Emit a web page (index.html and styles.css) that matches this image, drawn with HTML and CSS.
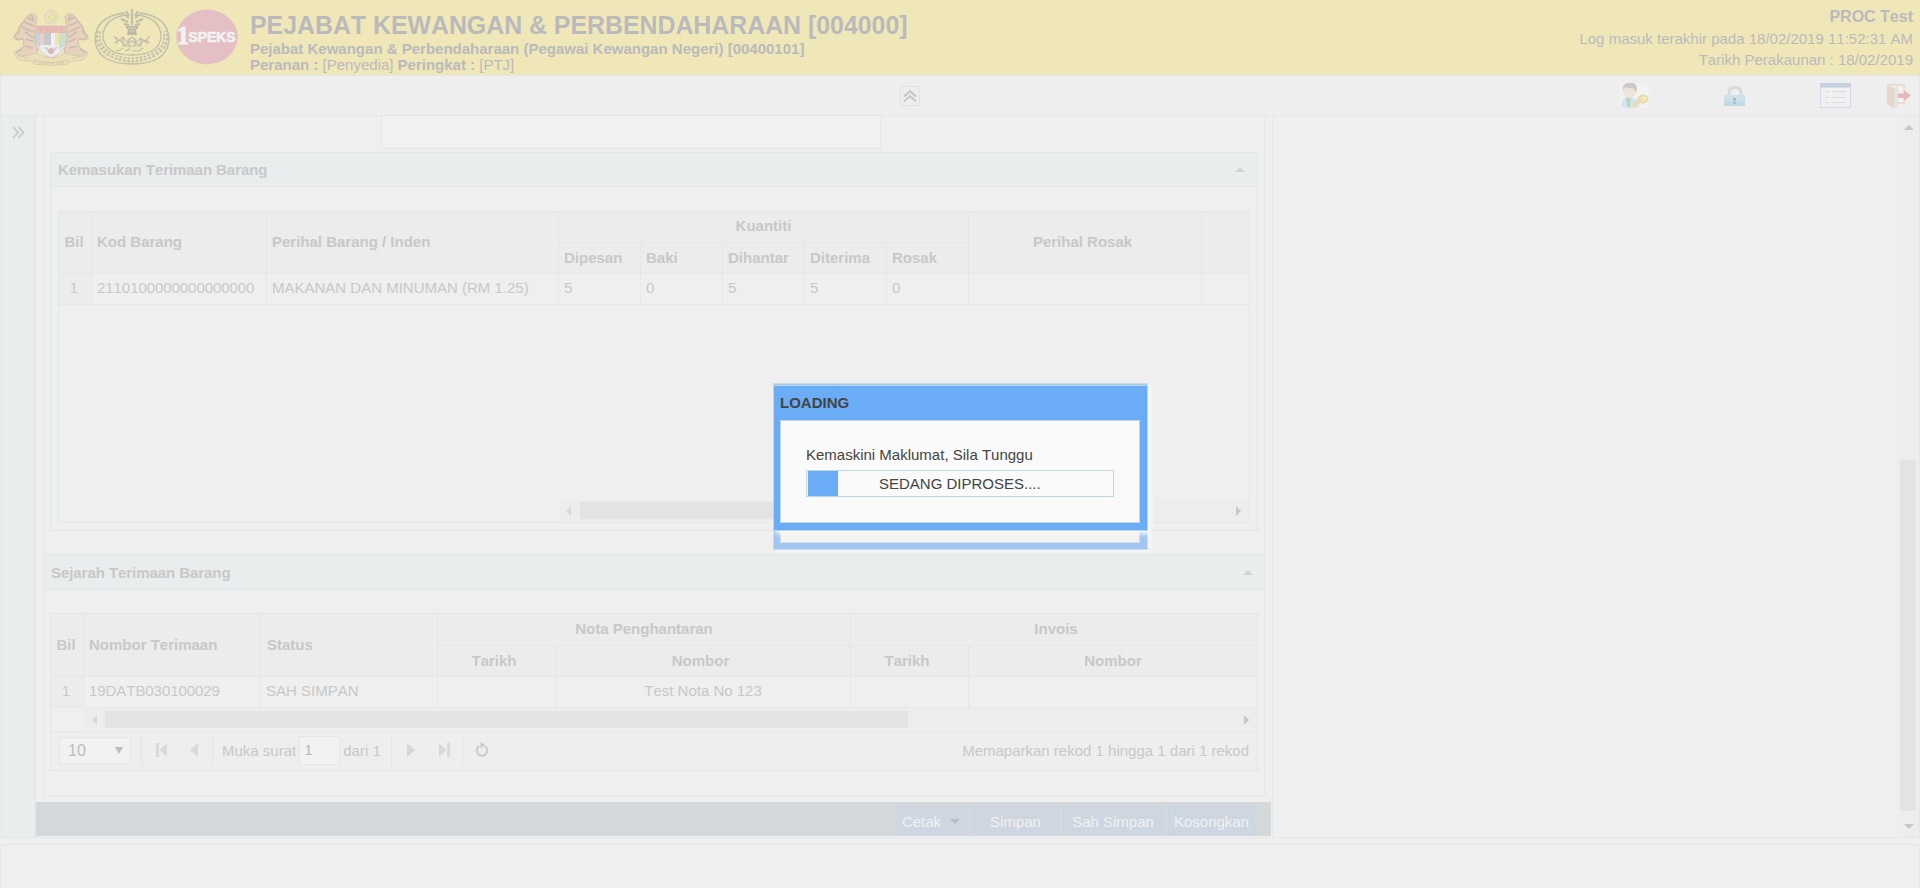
FILE: index.html
```html
<!DOCTYPE html>
<html lang="ms">
<head>
<meta charset="utf-8">
<title>1SPEKS - Terimaan Barang</title>
<link rel="stylesheet" href="styles.css">
</head>
<body>
<header class="banner">
  <div class="logos">
    <svg class="logo-crest" width="76" height="57" viewBox="0 0 76 57" fill="none">
      <circle cx="38" cy="8" r="6" stroke="#e3ddbd" stroke-width="3"/>
      <circle cx="39" cy="8" r="3" fill="#eee5b0" stroke="#dcd3a8"/>
      <g id="tiger">
        <path d="M24 8q-4-5-8-2l-4 4-5 9-5 8 3 4 6-1-1 8-6 5 2 4h10l8-3 1-9-4-9 1-8z" fill="#e8d2bb" stroke="#d2c6b4" stroke-width="1.2"/>
        <path d="M14 8l7 4M11 13l10 4M9 18l11 5M12 23l9 6M13 30l9 3M12 37l8 2M7 22l-5 4M18 6l3 5M3 43l6-3" stroke="#c8bdba" stroke-width="1.6"/>
        <path d="M12 11q-8 7-7 15M23 20q-2 12 2 21" stroke="#dbbcaf" stroke-width="1.2"/>
        <path d="M10 29q-7 3-9 0l1-3" stroke="#cfc0ad" stroke-width="1.3"/>
      </g>
      <use href="#tiger" transform="matrix(-1 0 0 1 76 0)"/>
      <path d="M23 17h30v15q0 11-15 17-15-6-15-17z" fill="#ececec" stroke="#d8ccc5"/>
      <path d="M23 17h30v7H23z" fill="#e8b8b4"/><path d="M25 19v4m6-4v4m7-4v4m7-4v4m6-4v4" stroke="#e2cfaa" stroke-width="1.2"/>
      <path d="M23 24h4v15q-4-4-4-9z" fill="#c5d2df"/><path d="M27 24h4v12h-4z" fill="#e8cfc9"/>
      <path d="M31 24h7v12h-7z" fill="#c9c9cb"/><path d="M38 24h4v12h-4z" fill="#f1f1f1"/><path d="M42 24h4v12h-4z" fill="#efe5a8"/>
      <path d="M46 24h7v7q0 6-7 10z" fill="#c9dfcd"/>
      <circle cx="38" cy="42" r="3" fill="#d9b3b5"/><path d="M32 38l3 3m9-3-3 3" stroke="#bccbd6" stroke-width="1.6"/>
      <path d="M1 42q3 6 12 5l10-3q15 10 30 0l10 3q9 1 12-5-1 11-14 10-23 8-46 0Q2 53 1 42z" fill="#eadfb9" stroke="#d8cfb2"/>
      <path d="M21 51q17 5 34 0v4q-17 3-34 0z" fill="#eadfb4" stroke="#d7cdac"/>
      <path d="M25 54h26M6 47l11 3m53-3-11 3" stroke="#cec6af" stroke-dasharray="2 1"/>
    </svg>
    <svg class="logo-seal" width="76" height="57" viewBox="0 0 76 57" fill="none" stroke="#c1beab">
      <path d="M30 4Q1 8 1 31q2 24 37 24t37-24Q75 8 46 4" stroke-width="1.4"/>
      <path d="M31 6Q9 10 9 28q2 18 29 18t29-18Q67 10 45 6" stroke-width="1.3"/>
      <path d="M5 22Q1 37 17 46q21 10 42 0 16-9 12-24" stroke-width="5" stroke-dasharray="2.600 1.600" stroke="#c4c1ad"/>
      <path d="M5 22Q1 37 17 46q21 10 42 0 16-9 12-24" stroke="#eee5b6" stroke-width="1"/>
      <path d="M38 0v16M30 5l5 4m11-4-5 4M27 10l7 3m15-3-7 3M32 2l3 5m9-5-3 5M30 15l5 1m11-1-5 1" stroke-width="2.2"/>
      <path d="M31 17h14l-3 4 1 5H33l1-5z" fill="#bbb9a7" stroke="none"/><path d="M34 19h8m-7 3h6" stroke="#dbd3b0"/>
      <path d="M20 27l4 5 5-4 4 5 5-5 4 5 5-4 4 4 5-6M20 34l6-3 5 5 7-4 7 4 5-5 6 3M23 28v7m6-7v8m6-7v8m6-8v8m6-8v8m6-8v7" stroke-width="1.100"/>
      <path d="M22 41q4 2 7-2m2 3q5-1 5-4m2 4h7l4-3M28 37h19" stroke-width="1.200"/>
    </svg>
    <svg class="logo-speks" width="62" height="56" viewBox="0 0 62 56">
      <ellipse cx="31" cy="28" rx="30.7" ry="27.4" fill="#e4bfc3"/>
      <text x="1" y="34.500" textLength="12" lengthAdjust="spacingAndGlyphs" font-family="Liberation Serif, serif" font-weight="bold" font-size="25" fill="#f2f2f2" stroke="#f2f2f2">1</text>
      <text x="12.500" y="32.500" textLength="47" lengthAdjust="spacingAndGlyphs" font-family="Liberation Sans, sans-serif" font-weight="bold" font-size="14.500" fill="#f2f2f2" stroke="#f2f2f2" stroke-width=".7">SPEKS</text>
    </svg>
  </div>
  <div class="office">
    <h1>PEJABAT KEWANGAN &amp; PERBENDAHARAAN [004000]</h1>
    <p class="office-sub">Pejabat Kewangan &amp; Perbendaharaan (Pegawai Kewangan Negeri) [00400101]</p>
    <p class="office-role"><b>Peranan :</b> [Penyedia] <b>Peringkat :</b> [PTJ]</p>
  </div>
  <div class="session">
    <strong>PROC Test</strong>
    <span>Log masuk terakhir pada 18/02/2019 11:52:31 AM</span>
    <span>Tarikh Perakaunan : 18/02/2019</span>
  </div>
</header>

<div class="toolbar">
  <div class="collapse-top"><svg width="14" height="14" viewBox="0 0 14 14" fill="none" stroke="#c6c6c6" stroke-width="2"><path d="M1 7.500l6-5.500 6 5.500M1 12.500l6-5.500 6 5.500"/></svg></div>
  <div class="tools">
    <svg class="tool-user" width="30" height="26" viewBox="0 0 30 26">
      <path d="M0 0h30v25H0z" fill="#f2f2f2"/>
      <path d="M2 24q0-9 8-10 9 0 11 10-9 2-19 0z" fill="#d5e5ec"/><path d="M7 14l1 9 2 2 1-2 1-9z" fill="#b9d6bf"/>
      <ellipse cx="10.500" cy="8" rx="6.500" ry="7" fill="#f0e3da"/>
      <path d="M4 7q-1-7 6-7 7-1 8 5l-1 5q-1-4-4-5-4 1-6-1z" fill="#cfc9c3"/>
      <path d="M19 16l-8 8 2 1h3l6-6z" fill="#e9ddb5"/><ellipse cx="24" cy="16" rx="5" ry="4" fill="#eee3ae" stroke="#e4d8aa"/><ellipse cx="25.500" cy="15" rx="2" ry="1.300" fill="#f4efdc"/>
    </svg>
    <svg class="tool-lock" width="22" height="21" viewBox="0 0 22 21">
      <path d="M5 11V7q0-5.500 6-5.500T17 7v4" fill="none" stroke="#d9d9d9" stroke-width="3"/>
      <rect y="9" width="21" height="11" rx="1" fill="#cde1e9"/><path d="M0 15h21v5H0z" fill="#c1dae5"/><path d="M9 12h3v2l-1 1 1 3H9l1-3-1-1z" fill="#a9b9c0"/>
    </svg>
    <svg class="tool-list" width="31" height="25" viewBox="0 0 31 25">
      <rect x=".5" y=".5" width="30" height="24" fill="#f1f1f1" stroke="#d5daea"/><path d="M0 0h31v4.500H0z" fill="#c7d0e1"/>
      <path d="M5 8.500h4m3 0h14M5 14.500h4m3 0h14M5 19.500h4m3 0h14" stroke="#dcdcdc" stroke-width="1.200"/>
    </svg>
    <svg class="tool-exit" width="24" height="25" viewBox="0 0 24 25">
      <path d="M1 1h16v18H8" fill="#f3f1ef" stroke="#ead6c8" stroke-width="1.300"/><path d="M0 1l7 3v21l-7-5z" fill="#e7d6ca"/><path d="M7 4l4-2v20l-4 3z" fill="#e3e3e3"/>
      <path d="M11 9.500h6V6l7 5.500-7 5.500v-3h-6z" fill="#e5b9bb"/>
    </svg>
  </div>
</div>

<div class="workspace">
  <aside class="side"><svg width="13" height="13" viewBox="0 0 13 13" fill="none" stroke="#cdcfd1" stroke-width="1.900"><path d="M1 1l5 5.500L1 12M6.500 1l5 5.500-5 5.500"/></svg></aside>
  <main class="center">
    <div class="form">
      <div class="field-row"><div class="field"></div></div>
      <section class="panel">
        <h2 class="panel-title">Kemasukan Terimaan Barang<i class="fold"></i></h2>
        <div class="items">
          <div class="items-head">
            <div class="c tall num">Bil</div><div class="c tall">Kod Barang</div><div class="c tall">Perihal Barang / Inden</div>
            <div class="c group">Kuantiti</div><div class="c tall mid">Perihal Rosak</div><div class="c tall last"></div>
            <div class="c sub">Dipesan</div><div class="c sub">Baki</div><div class="c sub">Dihantar</div><div class="c sub">Diterima</div><div class="c sub">Rosak</div>
          </div>
          <div class="items-row">
            <div class="c num">1</div><div class="c code">2110100000000000000</div><div class="c">MAKANAN DAN MINUMAN (RM 1.25)</div>
            <div class="c">5</div><div class="c">0</div><div class="c">5</div><div class="c">5</div><div class="c">0</div><div class="c"></div><div class="c last"></div>
          </div>
          <div class="hscroll items-scroll"><i class="al"></i><div class="thumb"></div><i class="ar"></i></div>
        </div>
      </section>
      <section class="history">
        <h2 class="panel-title">Sejarah Terimaan Barang<i class="fold"></i></h2>
        <div class="log">
          <div class="log-head">
            <div class="c tall num">Bil</div><div class="c tall">Nombor Terimaan</div><div class="c tall status">Status</div>
            <div class="c pair">Nota Penghantaran</div><div class="c pair invoice last">Invois</div>
            <div class="c mid">Tarikh</div><div class="c mid">Nombor</div><div class="c mid">Tarikh</div><div class="c mid last">Nombor</div>
          </div>
          <div class="log-row">
            <div class="c num">1</div><div class="c code">19DATB030100029</div><div class="c">SAH SIMPAN</div><div class="c"></div><div class="c mid note">Test Nota No 123</div><div class="c"></div><div class="c last"></div>
          </div>
          <div class="hscroll log-scroll"><i class="al"></i><div class="thumb"></div><i class="ar"></i></div>
          <div class="pager">
            <div class="size"><span>10</span><i></i></div>
            <b class="sep s1"></b>
            <svg class="first" width="12" height="14" viewBox="0 0 12 14" fill="#d9d9d9"><path d="M0 0h3v14H0zM11 0v14L3.500 7z"/></svg>
            <svg class="prev" width="9" height="14" viewBox="0 0 9 14" fill="#d9d9d9"><path d="M8 0v14L0 7z"/></svg>
            <b class="sep s2"></b>
            <span class="page-label">Muka surat</span><div class="page">1</div><span class="of">dari 1</span>
            <b class="sep s3"></b>
            <svg class="next" width="9" height="14" viewBox="0 0 9 14" fill="#d6d6d6"><path d="M0 0v14l8-7z"/></svg>
            <svg class="end" width="12" height="14" viewBox="0 0 12 14" fill="#d9d9d9"><path d="M8 0h3v14H8zM0 0v14l7.500-7z"/></svg>
            <b class="sep s4"></b>
            <svg class="reload" width="14" height="15" viewBox="0 0 14 15"><path d="M10 4.200a5.300 5.300 0 1 1-6 0" fill="none" stroke="#cacaca" stroke-width="2"/><path d="M5.500 0l5 3-5 3.500z" fill="#cacaca"/></svg>
            <span class="summary">Memaparkan rekod 1 hingga 1 dari 1 rekod</span>
          </div>
        </div>
      </section>
    </div>
    <div class="actions">
      <div class="btn print">Cetak<i></i></div><div class="btn save">Simpan</div><div class="btn confirm">Sah Simpan</div><div class="btn clear">Kosongkan</div>
    </div>
  </main>
  <div class="vscroll"><i class="au"></i><div class="vthumb"></div><i class="ad"></i></div>
</div>
<footer class="bottom"></footer>

<div class="ghost"><div class="ghost-body"></div></div>
<div class="dialog">
  <div class="dialog-title">LOADING</div>
  <div class="dialog-body">
    <div class="message">Kemaskini Maklumat, Sila Tunggu</div>
    <div class="progress"><div class="bar"></div><span>SEDANG DIPROSES....</span></div>
  </div>
</div>
</body>
</html>
```

FILE: styles.css
```css
* { box-sizing: border-box; }
body {
  margin: 0; width: 1920px; height: 888px; overflow: hidden; position: relative;
  display: flex; flex-direction: column; background: #efefef; color: #c8c8c8;
  font: 15px/18px "Liberation Sans", Arial, sans-serif; font-kerning: none; white-space: nowrap;
}
h1, h2, p { margin: 0; }
svg { display: block; flex: none; }

.banner { height: 75px; flex: none; display: flex; background: #f0e7b8; color: #bababd; }
.logos { display: flex; width: 250px; padding: 9px 0 0 13px; }
.logo-seal { margin-left: 5px; }
.logo-speks { margin-left: 6px; }
.office { padding-top: 11px; }
.office h1 { font-size: 24.87px; line-height: 29px; }
.office-sub { font-weight: bold; line-height: 17px; }
.office-role { line-height: 16px; }
.session { margin-left: auto; padding: 6px 7px 0 0; display: flex; flex-direction: column; text-align: right; line-height: 21px; }
.session strong { font-size: 16px; line-height: 22px; }

.toolbar { height: 41px; flex: none; display: flex; border: 1px solid #e5e8e8; background: #eee; }
.collapse-top { width: 20px; height: 20px; margin: 10px 0 0 899px; border: 1px solid #e2e2e2; padding: 2px; }
.tools { display: flex; margin-left: auto; padding: 7px 8px 0 0; }
.tool-lock { margin: 3px 0 0 75px; }
.tool-list { margin-left: 74px; }
.tool-exit { margin: 1px 0 0 36px; }

.workspace { height: 722px; flex: none; display: flex; border-bottom: 1px solid #e4e8e8; }
.side { width: 36px; background: #e9eded; border-left: 1px solid #e5e9e9; border-right: 2px solid #e3e8e8; padding: 10px 0 0 11px; }
.center { width: 1237px; border-right: 1px solid #e5e8e8; }
.form { margin: 0 7px 6px 7px; height: 680px; border: 1px solid #e4e8e8; border-top: 0; }
.field-row { height: 36px; padding-left: 337px; }
.field { width: 500px; height: 33px; background: #f1f1f1; border: 1px solid #e2e9e9; border-top: 0; }
.panel { margin: 0 6px; height: 379px; border: 1px solid #e1e8e8; }
.panel-title { height: 34px; padding: 7px 11px 0 7px; display: flex; justify-content: space-between; font-size: 15px; line-height: 19px; letter-spacing: -.06px; background: #e9eded; border-bottom: 1px solid #e1e8e8; }
.panel > .panel-title { padding-right: 12px; }
.fold { width: 0; height: 0; margin-top: 7px; border: 5.500px solid transparent; border-top: 0; border-bottom: 5px solid #d2d4d4; }
.items { margin: 24px 7px 0; height: 312px; border: 1px solid #e3e8e8; display: flex; flex-direction: column; }
.items-head, .items-row { display: grid; grid-template-columns: 33px 175px 292px repeat(5, 82px) 233px 47px; }
.items-head { grid-template-rows: 31px 30px; height: 62px; background: #ececec; border-bottom: 1px solid #e5e7e7; font-weight: bold; }
.items-row { height: 31px; border-bottom: 1px dotted #e1e1e1; }
.c { display: flex; align-items: center; padding-left: 5px; padding-bottom: 2px; border-right: 1px dotted #e1e1e1; }
.c.sub { padding-bottom: 0; }
.c.num { padding: 0 2px 2px 0; justify-content: center; background: #ececec; }
.code { letter-spacing: -.06px; }
.c.last { border-right: 0; }
.tall { grid-row: 1 / 3; }
.c.mid { justify-content: center; padding: 0 5px 2px 0; }
.c.note { padding-right: 0; }
.log-head .c.mid { padding-bottom: 0; }
.group { grid-column: 4 / 9; grid-row: 1; justify-content: center; padding-left: 0; border-bottom: 1px dotted #e1e1e1; }
.hscroll { display: flex; align-items: center; background: #ededed; justify-content: space-between; }
.hscroll .thumb { height: 17px; background: #e3e3e3; margin-right: auto; }
.al, .ar { border: 5px solid transparent; }
.al { border-left: 0; border-right: 5px solid #d9d9d9; }
.ar { border-right: 0; border-left: 5px solid #c8c8c8; }
.items-scroll { margin: auto 0 1px 501px; height: 21px; padding: 0 8px 0 6px; }
.items-scroll .thumb { width: 400px; margin-left: 9px; }

.history { margin-top: 23px; border-top: 1px solid #e3e8e8; }
.history .panel-title { border-top: 1px solid #e3e8e8; height: 35px; }
.log { margin: 23px 6px 0; height: 158px; border: 1px solid #e1e8e8; }
.log-head, .log-row { display: grid; grid-template-columns: 33px 177px 177px 118px 295px 118px 288px; }
.log-head { grid-template-rows: 32px 30px; height: 63px; background: #ececec; border-bottom: 1px solid #e5e7e7; font-weight: bold; }
.log-head .tall { padding-bottom: 0; }
.log-row { height: 31px; border-bottom: 1px dotted #e1e1e1; }
.pair { grid-column: span 2; justify-content: center; padding-left: 0; border-bottom: 1px dotted #e1e1e1; }
.invoice { padding-left: 4px; }
.log-head .c.mid.last { padding-right: 0; }
.status { padding-left: 6px; }
.log-scroll { height: 23px; margin-left: 33px; padding: 0 8px 0 8px; }
.log-scroll .thumb { width: 803px; margin-left: 8px; }
.pager { height: 39px; border-top: 1px solid #e5e8e8; display: flex; align-items: center; background: #eee; padding: 0 8px 1px; line-height: 18px; }
.pager svg { margin-top: -2px; }
.size { width: 72px; height: 27px; display: flex; align-items: center; justify-content: space-between; padding: 0 7px 0 8px; background: #f1f1f1; border: 1px solid #e1e8e8; font-size: 16px; color: #bdbdbd; }
.size i { border: 4px solid transparent; border-bottom: 0; border-top: 7px solid #bdbdbd; }
.sep { width: 1px; height: 30px; background: #e4e6e6; }
.s1 { margin: 0 14px 0 10px; }
.prev { margin-left: 22px; }
.s2 { margin: 0 9px 0 13px; }
.page { width: 41px; height: 29px; margin: 0 2px 0 3px; padding: 4px; background: #f2f2f2; border: 1px solid #e2e7e7; color: #b8b8b8; }
.of { margin-left: 1px; }
.s3 { margin: 0 15px 0 10px; }
.end { margin-left: 23px; }
.s4 { margin: 0 12px 0 11px; }
.summary { margin-left: auto; }
.actions { height: 34px; background: #d4d8da; display: flex; padding-top: 4px; margin-right: 1px; }
.btn { height: 30px; background: #ced6e1; border: 1px solid #cad3e0; border-bottom: 0; color: #f1f1f1; display: flex; align-items: center; justify-content: center; }
.print { width: 72px; margin-left: 860px; padding: 1px 2px 0 0; border: 0; }
.print i { border: 5px solid transparent; border-top-color: #bbb; border-bottom: 0; margin-left: 9px; }
.save { width: 87px; margin-left: 4px; }
.confirm { width: 100px; margin-left: 4px; }
.clear { width: 87px; margin-left: 5px; }
.vscroll { margin-left: auto; width: 22px; background: #ededed; border-right: 1px solid #e4e8e8; display: flex; flex-direction: column; padding: 9px 2px 8px 2px; }
.au, .ad { align-self: center; border: 5px solid transparent; }
.au { border-top: 0; border-bottom: 5px solid #c6c6c6; }
.ad { border-bottom: 0; border-top: 5px solid #c6c6c6; margin-top: auto; }
.vthumb { height: 351px; background: #e3e3e3; margin: 330px 1px 0 0; }
.bottom { margin-top: 6px; height: 44px; border: 1px solid #e4e8e8; border-bottom: 0; }

.ghost, .dialog { position: absolute; left: 773px; width: 375px; border: 1px solid #c8dce8; }
.ghost { top: 383px; height: 167px; background: #a0c6f1; padding: 36px 7px 6px 6px; box-shadow: 3px 2px 3px #f6f6f6; }
.ghost-body { height: 100%; background: #f3f3f3; border: 1px solid #d0dfe2; }
.dialog { top: 385px; height: 146px; background: #6aacf6; border-color: #b9d7e4; padding: 0 7px 0 6px; color: #444; box-shadow: 3px 3px 4px #f8f8f8; }
.dialog-title { height: 34px; line-height: 33px; font-weight: bold; }
.dialog-body { height: 103px; background: #fafafa; border: 1px solid #bfd8e0; padding: 25px 25px 0; }
.message { line-height: 18px; }
.progress { margin-top: 6px; height: 27px; width: 308px; border: 1px solid #bfd8e0; display: flex; align-items: center; padding-left: 1px; }
.bar { width: 30px; height: 25px; background: #6aacf6; }
.progress span { margin-left: 41px; }
```
